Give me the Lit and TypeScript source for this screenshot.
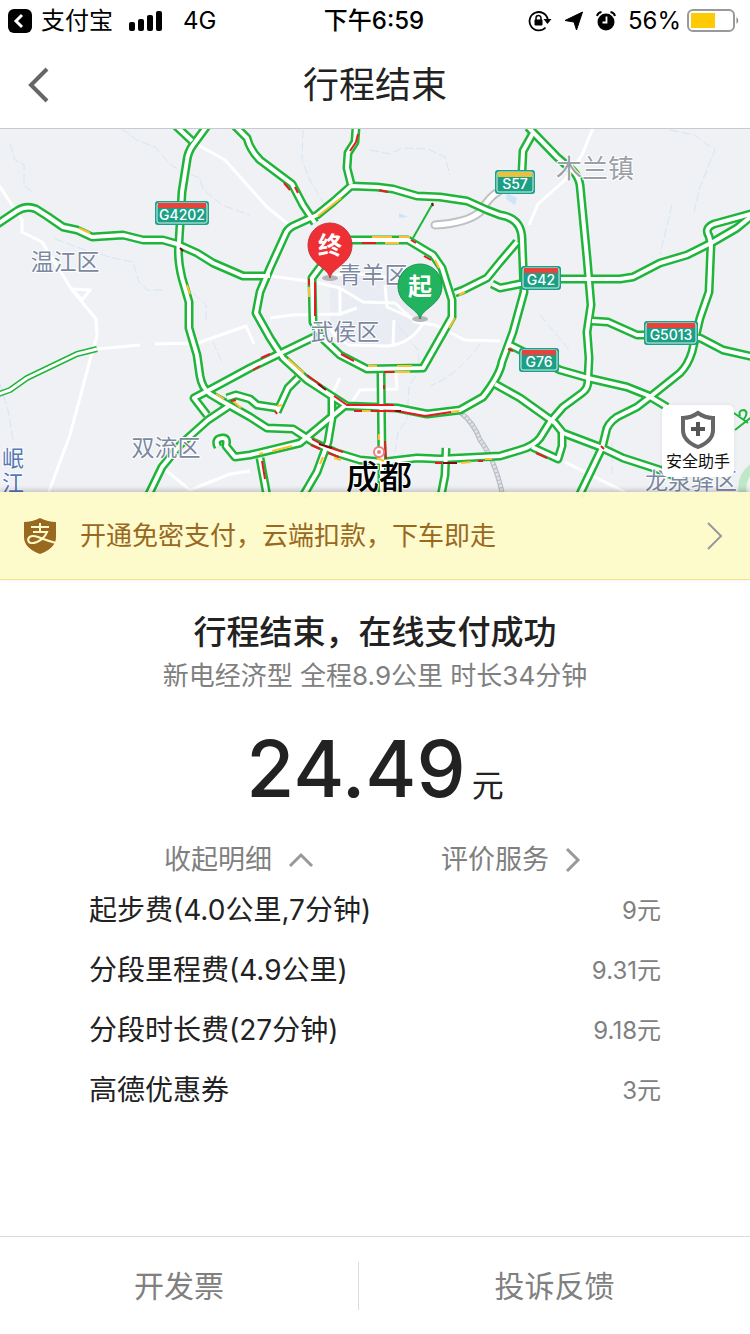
import { LitElement, html, svg, css } from "lit";
import { customElement, state } from "lit/decorators.js";

/* Expressways drawn as a green casing with a white core. */
const ROADS: string[] = [
  "M-4 225 L17 211 Q26 205 36 209 L47 216 L63 227 L77 230 L92 237 L123 235 L143 240 L163 240 L177 244 L197 253 L213 263 L243 276 L270 276",
  "M207 126 L193 145 Q188 152 187 160 L182 192 L179 242 Q177 258 182 278 L189 302 L189 328 L197 355 L200 376 Q202 388 210 394 L220 400 L250 417 L267 428 L293 429 L313 442 L337 453 L360 460 L383 462 L417 458 L440 459 L500 456 L520 450 Q534 446 540 438 L550 422 L563 407 L582 393 Q589 388 588 378 L589 358 L587 332 L591 305 L587 258 L580 185 Q579 177 572 170 L557 157 L528 127",
  "M176 126 L192 141",
  "M235 126 L247 138 Q250 150 260 160 L292 184 L303 205 L315 223",
  "M356 127 L355 142 L348 153 L347 168 L351 184",
  "M351 186 L377 187 L393 189 L417 196 L440 197 L467 201 L487 210 L500 215 Q522 218 522 240 L523 265 L524 292 L513 332 L502 362 Q500 375 483 397 L460 410 L427 414 L397 408 L347 406 L330 395 L307 380 L283 358 L270 338 L256 313 L260 292 L270 268 L285 235 Q287 229 293 226 L317 215 L333 202 Z",
  "M330 240 L408 240 L433 255 L442 268 L452 300 L452 317 L423 368 L367 369 L340 355 L322 338 L313 322 L312 278 L321 266",
  "M455 293 L463 290 L487 278 L500 262 L517 242",
  "M492 284 L500 288 L520 284 L560 279 L620 279 L633 277 L660 263 L687 255 L713 242 L737 228 L754 214",
  "M754 213 L714 224 Q704 228 709 236 L711 244 L709 292 L700 318 L692 352 Q688 365 680 373 L650 397 L637 407 L617 417 Q607 424 606 432 L602 448 L579 496",
  "M592 321 L608 322 L637 335 L667 335 L700 338 L723 350 L754 357",
  "M533 133 L523 151 L522 172 L510 187",
  "M510 345 L560 370 L588 378 L627 387 L647 395 L667 407",
  "M495 384 L520 398 L555 423 L563 433 L600 447 L623 458 L660 470 L684 480",
  "M562 433 L562 446 L558 459 L532 447",
  "M148 496 L162 467 L180 445 L208 420 L229 406",
  "M227 398 L236 395 L250 399 L257 405 L277 408",
  "M277 412 L288 388 L298 378",
  "M207 415 L194 398 L213 388 L250 368 L283 352 L316 336",
  "M218 447 Q214 439 222 438 Q228 437 226 446 L235 457 L250 455 L300 443 L330 418 L347 404",
  "M332 395 L332 418 L328 442 L317 472 L303 496",
  "M260 458 L267 496",
  "M381 373 L382 462 L382 496",
  "M446 448 L445 475 L441 496",
];

const LOCAL = [
  "M-2 184 L22 220 L22 232 L42 242 L62 274 L72 290 L96 319 L97 336 L90 360 L70 435 L48 494",
  "M72 289 L90 290 L82 300 Z M97 349 L140 345 M155 344 L198 343 L246 326 L254 344",
  "M198 145 L225 160 L250 188 M250 188 L268 208 L288 224",
  "M593 128 L582 155 L565 180 L538 204 L529 225",
  "M270 276 L315 282 L340 288 L363 302 L395 303 L415 322 L435 325 L465 340 L500 341",
  "M270 318 L292 315 L340 314 L357 308 M340 288 L340 316 M385 285 L387 307 L423 323 M397 280 Q360 270 330 276 M393 345 L394 320 M423 323 Q412 343 388 346 L350 345 Q333 338 330 326",
  "M340 378 L332 395 M350 405 L360 390 L397 389 L396 373",
  "M163 468 L190 490 L230 474 L250 471 M565 462 L625 492",
  "M145 496 Q143 518 105 546 L100 578 M137 514 Q158 568 218 575 M257 496 Q278 520 250 555 M584 490 L545 530 L516 553 L511 580 M446 496 L449 580 M663 492 L655 515 Q670 528 706 528 L754 550",
];

const STREAMS = [
  "M10 144 L15 160 L24 165 L24 185 L33 193 M122 129 L137 140 L155 147 L172 166 L199 178 L204 190 L222 205 L250 215",
  "M55 239 L85 250 L113 258 L133 262 L139 282 L147 290 L163 290 M193 293 L206 305 L206 322 M213 342 L222 362",
  "M0 384 L8 410 L13 440",
  "M303 130 L302 160 L310 180 L325 205 M370 150 L390 154 L402 148 L428 149 L445 157 L450 175",
  "M398 325 L418 350 L420 370 L409 386 L407 420 L398 432 L394 458",
  "M670 130 L694 135 L715 150 L700 187 L694 212 M672 205 L660 254 M612 442 L612 474 M540 315 L570 351 M480 344 Q458 375 430 386",
];

/* Slow and blocked stretches, one side of the carriageway each. */
const SLOW = "M79 228 L90 233 M187 285 L190 294 M216 394 L224 399 M233 401 L241 408 M318 216 L341 198 M372 237 L392 237 M385 243 L399 243 M399 237 L410 237 M435 260 L439 268 M309 287 L309 297 M368 366 L377 366 M397 366 L412 366 M395 372 L410 372 M459 295 L465 292 M449 328 L455 318 M288 359 L304 373 M361 411 L370 411 M451 412 L459 411 M379 434 L379 440 M272 451 L292 446 M259 454 L263 453 M334 458 L341 460 M320 464 L323 457 M461 463 L471 462 M485 459 L492 459 M282 405 L277 406 M377 458 L384 461";
const JAM = "M284 183 L290 190 M295 187 L298 193 M358 134 L356 142 L350 151 M379 190 L388 192 M362 243 L376 243 M411 240 L416 243 M424 256 L431 260 M309 279 L309 285 M315 282 L315 316 M341 354 L354 361 M261 358 L270 354 M253 370 L260 366 M384 372 L394 372 M384 385 L384 389 M307 375 L322 386 M334 396 L347 405 L394 405 M354 411 L362 411 M371 411 L397 411 L425 416 L451 412 M275 411 L277 414 M312 439 L321 444 M311 445 L320 449 M325 446 L343 452 M328 453 L339 457 M385 441 L386 459 M435 463 L442 463 M478 461 L483 461 M231 401 L236 400 M262 461 L265 479 M508 349 L513 351 M536 453 L547 458 M601 446 L604 449";
const BLOCKED = "M180 248 L183 251 M432 203 L433 206 M318 384 L326 390 M319 444 L332 448 M395 411 L401 411 M443 463 L457 463";

const SHIELDS = [
  { x: 156, y: 202, w: 52, name: "G4202", top: "#e9413c" },
  { x: 496, y: 171, w: 38, name: "S57", top: "#e9c13c" },
  { x: 522, y: 267, w: 38, name: "G42", top: "#e9413c" },
  { x: 645, y: 322, w: 52, name: "G5013", top: "#e9413c" },
  { x: 520, y: 349, w: 38, name: "G76", top: "#e9413c" },
];

const PLACES = [
  { x: 65, y: 270, size: 23, name: "温江区", tone: "district" },
  { x: 166, y: 456, size: 23, name: "双流区", tone: "district" },
  { x: 373, y: 283, size: 23, name: "青羊区", tone: "district" },
  { x: 345, y: 340, size: 23, name: "武侯区", tone: "district" },
  { x: 691, y: 489, size: 23, name: "龙泉驿区", tone: "district" },
  { x: 595, y: 178, size: 26, name: "木兰镇", tone: "town" },
  { x: 13, y: 466, size: 22, name: "岷", tone: "river" },
  { x: 13, y: 491, size: 22, name: "江", tone: "river" },
  { x: 379, y: 489, size: 33, name: "成都", tone: "city" },
];

@customElement("trip-map")
export class TripMap extends LitElement {
  static styles = css`
    :host { display: block; height: 451px; background: #eff1f5; }
    .canvas { display: block; width: 100%; height: 100%; }
    .canvas path { fill: none; stroke-linejoin: round; }
    .casing { stroke: #1fb53a; stroke-width: 9; }
    .core { stroke: #fff; stroke-width: 4; }
    .local { stroke: #fff; stroke-width: 3; }
    .stream { stroke: #d5e6f3; stroke-width: 1; stroke-dasharray: 9 3; }
    .traffic { stroke-width: 2; }
    .slow { stroke: #fcc132; }
    .jam { stroke: #e41b20; }
    .blocked { stroke: #7c0a12; }
    text { font-family: Inter, "Noto Sans CJK SC", sans-serif; text-anchor: middle; }
    .place { stroke: #fff; stroke-width: 2; paint-order: stroke; stroke-linejoin: round; }
    .district { fill: #7b889f; }
    .town { fill: #9ba0a8; }
    .river { fill: #5777b5; }
    .city { fill: #000; font-weight: 500; }
    .route { fill: #fff; font-size: 14px; font-weight: 500; }
    .pin { fill: #fff; font-size: 24px; font-weight: 700; }
  `;

  private pin(x: number, y: number, colour: string, edge: string, label: string) {
    return svg`
      <ellipse cx=${x} cy=${y + 33} rx="8" ry="3" fill="#9a9a9a" opacity=".7"></ellipse>
      <path d="M${x} ${y + 33} C${x - 2} ${y + 22} ${x - 22} ${y + 19} ${x - 22} ${y} A22 22 0 1 1 ${x + 22} ${y} C${x + 22} ${y + 19} ${x + 2} ${y + 22} ${x} ${y + 33} Z"
        style="fill:${colour};stroke:${edge}"></path>
      <text class="pin" x=${x} y=${y + 9}>${label}</text>`;
  }

  render() {
    return html`
      <svg class="canvas" viewBox="0 129 750 451" preserveAspectRatio="xMidYMin slice" role="img" aria-label="行程地图">
        <path d="M330 276 Q360 270 400 280 L420 300 L423 323 Q412 343 388 346 L350 345 Q333 338 330 326 Z" style="fill:#eaecf3"></path>
        ${STREAMS.map((d) => svg`<path class="stream" d=${d}></path>`)}
        <path d="M507 193 L517 198 L515 205 L506 199 Z M399 213 L408 217 L399 218 Z" style="fill:#cfe4f6"></path>
        <path d="M739 496 Q735 472 754 462 L754 472 Q744 480 747 496 Z" style="fill:#bfe8c8"></path>
        ${LOCAL.map((d) => svg`<path class="local" d=${d}></path>`)}
        <path d="M460 412 Q474 423 480 440 Q494 458 502 492" style="stroke:#b5bac2;stroke-width:5"></path>
        <path d="M460 412 Q474 423 480 440 Q494 458 502 492" style="stroke:#dfe2e7;stroke-width:3;stroke-dasharray:3 1"></path>
        <path d="M498 192 Q490 196 480 212 Q467 223 435 225" style="stroke:#bfc0c2;stroke-width:9;stroke-linecap:round"></path>
        <path d="M498 192 Q490 196 480 212 Q467 223 435 225" style="stroke:#fff;stroke-width:5;stroke-linecap:round"></path>
        <path d="M413 238 L433 203" style="stroke:#1fb53a;stroke-width:2"></path>
        <path d="M-4 395 L10 390 L27 378 L77 354 L97 349" style="stroke:#1fb53a;stroke-width:6"></path>
        <path d="M-4 395 L10 390 L27 378 L77 354 L97 349" style="stroke:#fff;stroke-width:3"></path>
        <path d="M734 413 L748 423 M735 430 L754 415 M740 416 Q738 410 744 410 Q749 412 744 419" style="stroke:#1fb53a;stroke-width:2"></path>
        ${ROADS.map((d) => svg`<path class="casing" d=${d}></path>`)}
        ${ROADS.map((d) => svg`<path class="core" d=${d}></path>`)}
        <path class="traffic slow" d=${SLOW}></path>
        <path class="traffic jam" d=${JAM}></path>
        <path class="traffic blocked" d=${BLOCKED}></path>
        ${PLACES.map((p) => svg`<text class="place ${p.tone}" x=${p.x} y=${p.y} font-size=${p.size}>${p.name}</text>`)}
        <circle cx="379" cy="452" r="5" fill="#fff" stroke="#ec7f84" stroke-width="2"></circle>
        <circle cx="379" cy="452" r="2" fill="#ec7f84"></circle>
        ${SHIELDS.map((s) => svg`
          <rect x=${s.x - 1} y=${s.y - 1} width=${s.w + 2} height="24" rx="3" fill="#1c9f86"></rect>
          <rect x=${s.x + 1} y=${s.y + 1} width=${s.w - 2} height="20" rx="2" fill="#1c9f86" stroke="#d5f1e9"></rect>
          <rect x=${s.x + 2} y=${s.y + 1} width=${s.w - 4} height="5" fill=${s.top}></rect>
          <text class="route" x=${s.x + s.w / 2} y=${s.y + 18}>${s.name}</text>`)}
        ${this.pin(330, 245, "#ee3035", "#c4353a", "终")}
        ${this.pin(420, 286, "#21b35e", "#1f9450", "起")}
      </svg>`;
  }
}

@customElement("status-bar")
export class StatusBar extends LitElement {
  static styles = css`
    :host { display: grid; grid-template-columns: 1fr auto 1fr; align-items: center; height: 42px; padding: 0 10px 0 8px; color: #000; font-size: 24px; line-height: 32px; box-sizing: border-box; }
    .side { display: flex; align-items: center; }
    .app { margin: 0 16px 0 9px; }
    .net { margin-left: 20px; }
    .time { font-weight: 500; }
    .right { justify-content: flex-end; }
    .gap { margin-right: 12px; }
    .level { margin-right: 6px; }
    svg { display: block; flex: none; }
  `;
  render() {
    return html`
      <div class="side">
        <svg width="24" height="24" viewBox="0 0 24 24"><rect width="24" height="24" rx="6"/><path d="M14 6 L8 12 L14 18" fill="none" stroke="#fff" stroke-width="3"/></svg>
        <span class="app">支付宝</span>
        <svg width="34" height="20" viewBox="0 0 34 20"><rect y="11" width="6" height="9" rx="2"/><rect x="9" y="8" width="6" height="12" rx="2"/><rect x="18" y="4" width="6" height="16" rx="2"/><rect x="27" width="6" height="20" rx="2"/></svg>
        <span class="net">4G</span>
      </div>
      <span class="time">下午6:59</span>
      <div class="side right">
        <svg class="gap" width="24" height="22" viewBox="0 0 24 22"><path d="M17.500 17.500 A9.200 9.200 0 1 1 19.800 9.500" fill="none" stroke="#000" stroke-width="1.800"/><path d="M15.500 9 H23.500 L19.500 14 Z"/><rect x="6.500" y="9.500" width="8" height="6" rx="1"/><path d="M8 10 V8 A2.500 2.500 0 0 1 13 8 V10" fill="none" stroke="#000" stroke-width="1.500"/></svg>
        <svg class="gap" width="20" height="20" viewBox="0 0 20 20"><path d="M18.500 1 L12.500 19 L10 11 L1 9.500 Z" stroke="#000" stroke-width="1" stroke-linejoin="round"/></svg>
        <svg class="gap" width="20" height="20" viewBox="0 0 20 20"><circle cx="10" cy="11" r="8.500"/><path d="M1 5 Q2 1.500 5.500 1 M19 5 Q18 1.500 14.500 1" fill="none" stroke="#000" stroke-width="2"/><path d="M10.500 5.500 V11.500 H6.500" fill="none" stroke="#fff" stroke-width="1.800"/></svg>
        <span class="level">56%</span>
        <svg width="53" height="24" viewBox="0 0 53 24"><rect x="1" y="1" width="46" height="21" rx="5" fill="#fff" stroke="#999" stroke-width="2"/><rect x="4" y="4" width="24" height="15" fill="#fdca05"/><path d="M49.500 8 Q53 11.500 49.500 15 Z" fill="#888"/></svg>
      </div>`;
  }
}

@customElement("app-root")
export class AppRoot extends LitElement {
  @state() private open = true;

  private fees = [
    { name: "起步费(4.0公里,7分钟)", value: "9元" },
    { name: "分段里程费(4.9公里)", value: "9.31元" },
    { name: "分段时长费(27分钟)", value: "9.18元" },
    { name: "高德优惠券", value: "3元" },
  ];

  static styles = css`
    :host { display: flex; flex-direction: column; min-height: 100vh; background: #fff; color: #222; font-family: Inter, "Noto Sans CJK SC", sans-serif; }
    button, a { font: inherit; color: inherit; background: none; border: 0; padding: 0; text-decoration: none; cursor: pointer; }
    svg { display: block; flex: none; }
    .title-bar { display: grid; grid-template-columns: 1fr auto 1fr; align-items: center; height: 86px; padding: 0 28px; border-bottom: 1px solid #c9c9cf; box-sizing: content-box; }
    .title-bar h1 { margin: 0; font-size: 36px; line-height: 48px; font-weight: 400; }
    .back { justify-self: start; }
    .stage { position: relative; }
    .assist { position: absolute; right: 16px; top: 276px; width: 72px; height: 72px; display: flex; flex-direction: column; align-items: center; gap: 1px; padding-top: 5px; box-sizing: border-box; background: #fff; border-radius: 6px; box-shadow: 0 0 4px #0001; font-size: 16px; line-height: 20px; color: #111; white-space: nowrap; }
    .banner { position: absolute; left: 0; right: 0; bottom: 0; height: 88px; display: flex; align-items: center; padding: 0 26px 0 23px; box-sizing: border-box; background: #fdfac9f4; border-bottom: 1px solid #eee58a; box-shadow: 0 -2px 5px #0003; color: #98691f; font-size: 26px; line-height: 36px; }
    .banner span { flex: 1; margin-left: 23px; text-align: left; }
    .summary { display: flex; flex-direction: column; align-items: center; padding-top: 30px; }
    .summary h2 { margin: 0; font-size: 33px; line-height: 44px; font-weight: 500; }
    .summary p { margin: 0; font-size: 26px; line-height: 44px; color: #808080; }
    .amount { display: flex; align-items: baseline; gap: 6px; margin-top: 25px; line-height: 92px; }
    .amount strong { font-size: 78px; font-weight: 500; }
    .amount span { font-size: 32px; }
    .actions { display: grid; grid-template-columns: 1fr 1fr; margin-top: 10px; padding: 0 103px; color: #808080; font-size: 27px; line-height: 36px; }
    .actions > * { display: flex; justify-content: center; align-items: center; gap: 16px; }
    .fees { margin: 0; padding: 0 89px; }
    .fee { display: flex; justify-content: space-between; height: 60px; align-items: center; font-size: 28px; }
    .fee dd { margin: 0; font-size: 24px; color: #808080; }
    .footer { display: grid; grid-template-columns: 358fr 392fr; height: 97px; margin-top: auto; border-top: 1px solid #dcdcdc; align-items: center; color: #808080; font-size: 30px; }
    .footer a { text-align: center; line-height: 48px; }
    .footer a + a { border-left: 1px solid #dcdcdc; }
  `;

  render() {
    return html`
      <status-bar lang="zh-CN"></status-bar>
      <header class="title-bar" lang="zh-CN">
        <button class="back" aria-label="返回"><svg width="22" height="36" viewBox="0 0 22 36"><path d="M19 2 L3 18 L19 34" fill="none" stroke="#666" stroke-width="4"/></svg></button>
        <h1>行程结束</h1>
      </header>
      <section class="stage" lang="zh-CN">
        <trip-map></trip-map>
        <button class="assist">
          <svg width="36" height="40" viewBox="0 0 36 40"><path d="M18 3 Q25 8 33 8 V20 Q33 31 18 37 Q3 31 3 20 V8 Q11 8 18 3 Z" fill="none" stroke="#666" stroke-width="4"/><path d="M18 12 V26 M11 19 H25" stroke="#555" stroke-width="4"/></svg>
          安全助手
        </button>
        <button class="banner">
          <svg width="34" height="38" viewBox="0 0 34 38"><path d="M17 1 Q25 5 33 5 V20 Q33 31 17 37 Q1 31 1 20 V5 Q9 5 17 1 Z" fill="#98691f"/><path d="M8 10 H26 M17 6 V15 M10 15 H24 Q21 22 14 25 Q6 28 5 23 Q6 17 15 20 Q25 24 33 26" fill="none" stroke="#fdfac9" stroke-width="2"/></svg>
          <span>开通免密支付，云端扣款，下车即走</span>
          <svg width="18" height="30" viewBox="0 0 18 30"><path d="M2 2 L15 15 L2 28" fill="none" stroke="#999" stroke-width="2"/></svg>
        </button>
      </section>
      <main class="summary" lang="zh-CN">
        <h2>行程结束，在线支付成功</h2>
        <p>新电经济型 全程8.9公里 时长34分钟</p>
        <div class="amount"><strong>24.49</strong><span>元</span></div>
      </main>
      <div class="actions" lang="zh-CN">
        <button aria-expanded=${this.open} @click=${() => (this.open = !this.open)}>收起明细
          <svg width="26" height="16" viewBox="0 0 26 16"><path d="M2 14 L13 3 L24 14" fill="none" stroke="#999" stroke-width="3"/></svg></button>
        <a href="#rate">评价服务
          <svg width="16" height="26" viewBox="0 0 16 26"><path d="M2 2 L13 13 L2 24" fill="none" stroke="#999" stroke-width="3"/></svg></a>
      </div>
      ${this.open
        ? html`<dl class="fees" lang="zh-CN">${this.fees.map((f) => html`<div class="fee"><dt>${f.name}</dt><dd>${f.value}</dd></div>`)}</dl>`
        : null}
      <nav class="footer" lang="zh-CN"><a href="#invoice">开发票</a><a href="#feedback">投诉反馈</a></nav>`;
  }
}
